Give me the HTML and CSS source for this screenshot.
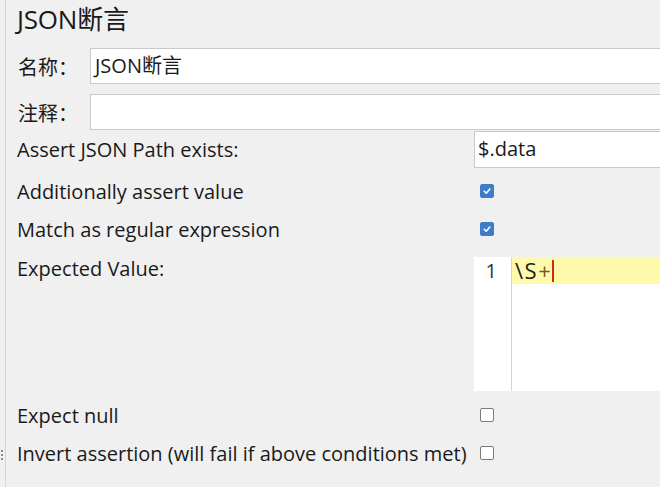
FILE: index.html
```html
<!DOCTYPE html>
<html lang="zh">
<head>
<meta charset="utf-8">
<link rel="stylesheet" href="styles.css">
</head>
<body>
<div class="frame">
  <div class="grip"><span></span><span></span><span></span></div>
  <div class="panel">
    <h1 class="title">JSON断言</h1>
    <div class="field">
      <label class="flabel">名称：</label>
      <div class="input">JSON断言</div>
    </div>
    <div class="field">
      <label class="flabel">注释：</label>
      <div class="input"></div>
    </div>
    <div class="row row-path">
      <div class="label">Assert JSON Path exists:</div>
      <div class="input path">$.data</div>
    </div>
    <div class="row row-first">
      <div class="label">Additionally assert value</div>
      <div class="ctl"><span class="cb checked"><svg viewBox="0 0 14 14"><path d="M3.8 7.3 L6.1 9.6 L10.3 4.7" fill="none" stroke="#fff" stroke-width="1.9" stroke-linecap="round" stroke-linejoin="round"/></svg></span></div>
    </div>
    <div class="row">
      <div class="label">Match as regular expression</div>
      <div class="ctl"><span class="cb checked"><svg viewBox="0 0 14 14"><path d="M3.8 7.3 L6.1 9.6 L10.3 4.7" fill="none" stroke="#fff" stroke-width="1.9" stroke-linecap="round" stroke-linejoin="round"/></svg></span></div>
    </div>
    <div class="row row-editor">
      <div class="label">Expected Value:</div>
      <div class="editor">
        <div class="gutter">1</div>
        <div class="code"><div class="line">\S<span class="plus">+</span><span class="caret"></span></div></div>
      </div>
    </div>
    <div class="row">
      <div class="label">Expect null</div>
      <div class="ctl"><span class="cb"></span></div>
    </div>
    <div class="row">
      <div class="label">Invert assertion (will fail if above conditions met)</div>
      <div class="ctl"><span class="cb"></span></div>
    </div>
  </div>
</div>
</body>
</html>
```

FILE: styles.css
```css
html, body {
  margin: 0;
  padding: 0;
  background: #f0f0f0;
  width: 660px;
  height: 487px;
  overflow: hidden;
}
body {
  font-family: "Open Sans", "Noto Sans CJK SC", sans-serif;
  color: #1a1a1a;
}
.frame {
  display: flex;
  height: 487px;
}
.grip {
  width: 6px;
  border-right: 1px solid #d6d6d6;
  display: flex;
  flex-direction: column;
  justify-content: flex-end;
  align-items: flex-start;
  gap: 2px;
  padding-bottom: 27px;
  box-sizing: border-box;
}
.grip span {
  width: 2px;
  height: 2px;
  margin-left: 1px;
  background: #8a8a8a;
}
.panel {
  flex: 1;
  padding-left: 11px;
  display: flex;
  flex-direction: column;
  min-width: 0;
}
.title {
  margin: 0;
  font-weight: normal;
  font-size: 26px;
  line-height: 32px;
  height: 48px;
  padding-top: 3px;
  box-sizing: border-box;
  letter-spacing: -0.2px;
}
.field {
  display: flex;
  align-items: center;
  height: 36px;
}
.field + .field {
  margin-top: 10px;
}
.flabel {
  width: 72px;
  font-size: 20px;
  flex: none;
  padding-left: 1px;
}
.input {
  flex: 1;
  height: 36px;
  box-sizing: border-box;
  background: #fff;
  border: 1px solid #c9c9c9;
  border-right: none;
  font-size: 20px;
  line-height: 34px;
  padding-left: 4px;
  white-space: nowrap;
}
.row {
  display: flex;
  align-items: center;
  height: 38px;
  font-size: 20px;
}
.row-path {
  margin-top: 1px;
  height: 37px;
}
.row-first {
  margin-top: 4px;
}
.label {
  width: 457px;
  flex: none;
  white-space: nowrap;
}
.input.path {
  height: 37px;
  padding-left: 3px;
}
.ctl {
  padding-left: 6px;
  display: flex;
  align-items: center;
}
.cb {
  width: 14px;
  height: 14px;
  box-sizing: border-box;
  border: 1px solid #7a7a7a;
  border-radius: 2px;
  background: #fff;
  display: block;
}
.cb.checked {
  background: #3d7cc9;
  border-color: #3d7cc9;
}
.cb svg {
  display: block;
  width: 12px;
  height: 12px;
}
.row-editor {
  height: 134px;
  align-items: flex-start;
  margin-top: 9px;
  margin-bottom: 5px;
}
.row-editor .label {
  line-height: 24px;
}
.editor {
  flex: 1;
  height: 134px;
  display: flex;
  background: #fff;
}
.gutter {
  width: 38px;
  flex: none;
  border-right: 1px solid #d4d4d4;
  text-align: right;
  padding-right: 14px;
  box-sizing: border-box;
  font-size: 20px;
  line-height: 27px;
  color: #333;
  font-family: "Open Sans", sans-serif;
}
.code {
  flex: 1;
}
.line {
  height: 27px;
  background: #fffaab;
  font-size: 22px;
  line-height: 27px;
  padding-left: 3px;
  font-family: "Open Sans", sans-serif;
  color: #222;
  display: flex;
  align-items: center;
  letter-spacing: 1.5px;
}
.plus {
  color: #7a5a2a;
}
.caret {
  display: inline-block;
  width: 2px;
  height: 22px;
  background: #d42a10;
  margin-left: 0;
}
```
